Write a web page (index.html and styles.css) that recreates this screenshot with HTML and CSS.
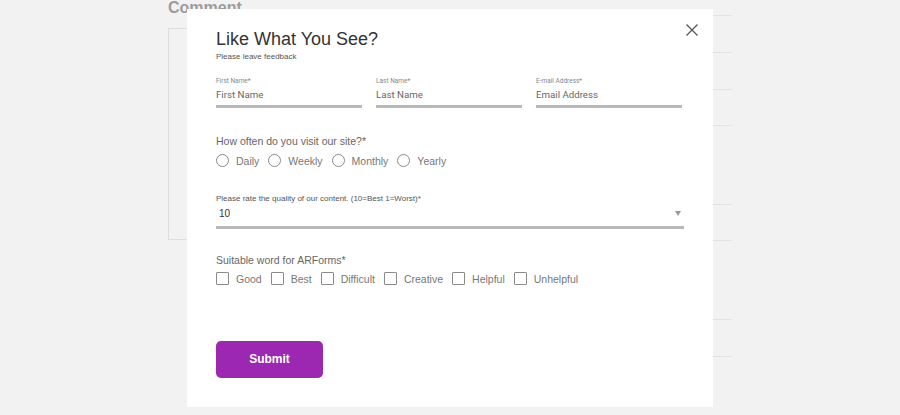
FILE: index.html
```html
<!DOCTYPE html>
<html lang="en">
<head>
<meta charset="utf-8">
<title>Like What You See?</title>
<link rel="stylesheet" href="styles.css">
</head>
<body>
<div class="page">
  <div class="page-main">
    <h2 class="page-heading">Comment</h2>
    <div class="page-textarea"></div>
  </div>
  <div class="page-side">
    <div class="side-row r15"></div>
    <div class="side-row r36"></div>
    <div class="side-row r36"></div>
    <div class="side-row r35"></div>
    <div class="side-row r78"></div>
    <div class="side-row r35"></div>
    <div class="side-row r78"></div>
    <div class="side-row r36"></div>
  </div>
</div>

<div class="modal">
  <button class="modal-close" type="button" aria-label="Close">
    <svg width="12" height="12" viewBox="0 0 12 12"><path d="M0.5 0.5 L11.5 11.5 M11.5 0.5 L0.5 11.5" stroke="#555" stroke-width="1.3" fill="none"/></svg>
  </button>
  <h1 class="modal-title">Like What You See?</h1>
  <p class="modal-sub">Please leave feedback</p>

  <div class="fields">
    <div class="field">
      <div class="field-label">First Name*</div>
      <div class="field-input">First Name</div>
    </div>
    <div class="field">
      <div class="field-label">Last Name*</div>
      <div class="field-input">Last Name</div>
    </div>
    <div class="field">
      <div class="field-label">E-mail Address*</div>
      <div class="field-input">Email Address</div>
    </div>
  </div>

  <div class="group">
    <div class="group-label">How often do you visit our site?*</div>
    <div class="options">
      <span class="opt"><span class="radio"></span>Daily</span>
      <span class="opt"><span class="radio"></span>Weekly</span>
      <span class="opt"><span class="radio"></span>Monthly</span>
      <span class="opt"><span class="radio"></span>Yearly</span>
    </div>
  </div>

  <div class="rate">
    <div class="rate-label">Please rate the quality of our content. (10=Best 1=Worst)*</div>
    <div class="select">
      <span class="select-value">10</span>
      <span class="select-arrow"></span>
    </div>
  </div>

  <div class="group group-check">
    <div class="group-label">Suitable word for ARForms*</div>
    <div class="options">
      <span class="opt"><span class="check"></span>Good</span>
      <span class="opt"><span class="check"></span>Best</span>
      <span class="opt"><span class="check"></span>Difficult</span>
      <span class="opt"><span class="check"></span>Creative</span>
      <span class="opt"><span class="check"></span>Helpful</span>
      <span class="opt"><span class="check"></span>Unhelpful</span>
    </div>
  </div>

  <button class="submit" type="button">Submit</button>
</div>
</body>
</html>
```

FILE: styles.css
```css
html, body {
  margin: 0;
  padding: 0;
}
body {
  width: 900px;
  height: 415px;
  overflow: hidden;
  background: #f2f2f2;
  font-family: "Liberation Sans", Arial, sans-serif;
  position: relative;
}

/* background page */
.page {
  display: flex;
  padding-left: 168px;
}
.page-main {
  width: 390px;
}
.page-heading {
  margin: 0;
  font-size: 16px;
  line-height: 16px;
  font-weight: bold;
  color: #9c9c9c;
}
.page-textarea {
  margin-top: 12px;
  width: 380px;
  height: 210px;
  border: 1px solid #dedede;
}
.page-side {
  width: 174px;
  display: flex;
  flex-direction: column;
}
.side-row {
  border-bottom: 1px solid #e3e3e3;
}
.r15 { height: 15px; }
.r35 { height: 35px; }
.r36 { height: 36px; }
.r78 { height: 78px; }

/* modal */
.modal {
  position: absolute;
  left: 187px;
  top: 9px;
  width: 526px;
  height: 398px;
  box-sizing: border-box;
  background: #fff;
  padding: 19px 29px 0;
}
.modal-close {
  position: absolute;
  top: 15px;
  right: 15px;
  width: 12px;
  height: 12px;
  padding: 0;
  border: 0;
  background: none;
  display: block;
}
.modal-close svg {
  display: block;
}
.modal-title {
  margin: 0;
  font-size: 18px;
  line-height: 22px;
  font-weight: normal;
  color: #333;
}
.modal-sub {
  margin: 2px 0 0;
  font-size: 8px;
  line-height: 10px;
  color: #555;
}

.fields {
  margin-top: 15px;
  display: grid;
  grid-template-columns: 146px 146px 146px;
  column-gap: 14px;
}
.field-label {
  font-family: Roboto, "Liberation Sans", sans-serif;
  font-size: 6.5px;
  line-height: 8px;
  color: #888;
}
.field-input {
  margin-top: 3.4px;
  font-family: Roboto, "Liberation Sans", sans-serif;
  font-size: 9.7px;
  line-height: 13px;
  color: #666;
  padding-bottom: 3.3px;
  border-bottom: 3px solid #b8b8b8;
}

.group {
  margin-top: 27px;
}
.group-label {
  font-size: 10.5px;
  line-height: 13px;
  color: #666;
}
.options {
  margin-top: 6px;
  display: flex;
  align-items: center;
}
.opt {
  display: flex;
  align-items: center;
  font-size: 10.5px;
  line-height: 14px;
  color: #777;
  margin-right: 9px;
}
.radio {
  width: 13px;
  height: 13px;
  box-sizing: border-box;
  border: 1px solid #8a8a8a;
  border-radius: 50%;
  margin-right: 7px;
}
.check {
  width: 13px;
  height: 13px;
  box-sizing: border-box;
  border: 1px solid #8a8a8a;
  border-radius: 1px;
  margin-right: 7px;
}

.rate {
  margin-top: 26px;
}
.rate-label {
  font-size: 8px;
  line-height: 10px;
  color: #555;
}
.select {
  margin-top: 4px;
  display: flex;
  align-items: center;
  justify-content: space-between;
  padding: 0 3px 6px 3px;
  border-bottom: 3px solid #b8b8b8;
}
.select-value {
  font-size: 10px;
  line-height: 12px;
  color: #333;
}
.select-arrow {
  width: 0;
  height: 0;
  border-left: 3px solid transparent;
  border-right: 3px solid transparent;
  border-top: 5px solid #999;
}

.group-check {
  margin-top: 25px;
}
.group-check .options {
  margin-top: 5px;
}

.submit {
  margin-top: 55px;
  width: 107px;
  height: 37px;
  border: 0;
  border-radius: 5px;
  background: #9c27b0;
  color: #fff;
  font-family: "Liberation Sans", Arial, sans-serif;
  font-size: 12px;
  font-weight: bold;
  display: flex;
  align-items: center;
  justify-content: center;
  padding: 0;
}
```
